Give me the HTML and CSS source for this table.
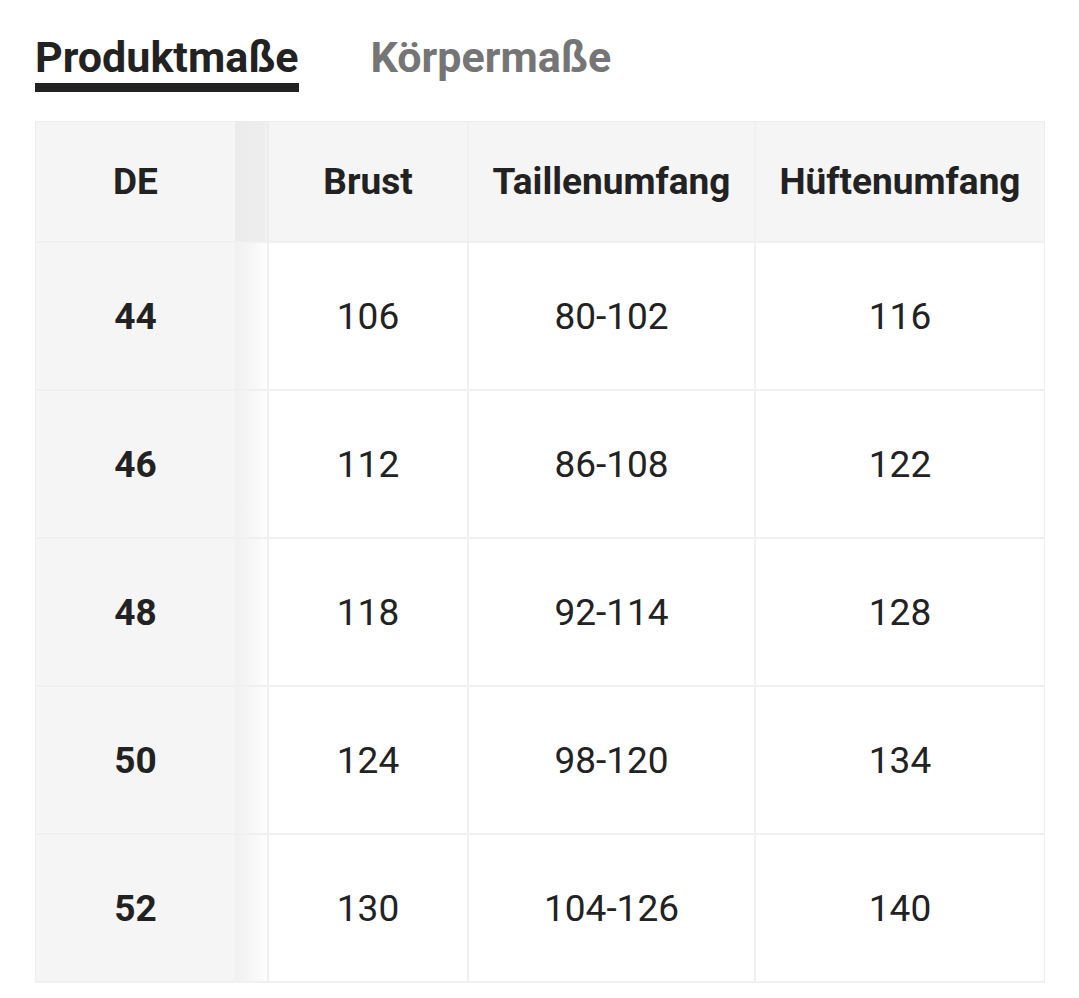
FILE: index.html
```html
<!DOCTYPE html>
<html lang="de">
<head>
<meta charset="utf-8">
<link rel="stylesheet" href="styles.css">
</head>
<body>
<div class="page">
  <div class="tabs">
    <div class="tab active">Produktmaße</div>
    <div class="tab">Körpermaße</div>
  </div>
  <div class="table">
    <div class="row head">
      <div class="cell sticky">DE</div>
      <div class="cell shade"></div>
      <div class="cell c1">Brust</div>
      <div class="cell c2">Taillenumfang</div>
      <div class="cell c3">Hüftenumfang</div>
    </div>
    <div class="row">
      <div class="cell sticky">44</div>
      <div class="cell shade"></div>
      <div class="cell c1">106</div>
      <div class="cell c2">80-102</div>
      <div class="cell c3">116</div>
    </div>
    <div class="row">
      <div class="cell sticky">46</div>
      <div class="cell shade"></div>
      <div class="cell c1">112</div>
      <div class="cell c2">86-108</div>
      <div class="cell c3">122</div>
    </div>
    <div class="row">
      <div class="cell sticky">48</div>
      <div class="cell shade"></div>
      <div class="cell c1">118</div>
      <div class="cell c2">92-114</div>
      <div class="cell c3">128</div>
    </div>
    <div class="row">
      <div class="cell sticky">50</div>
      <div class="cell shade"></div>
      <div class="cell c1">124</div>
      <div class="cell c2">98-120</div>
      <div class="cell c3">134</div>
    </div>
    <div class="row last">
      <div class="cell sticky">52</div>
      <div class="cell shade"></div>
      <div class="cell c1">130</div>
      <div class="cell c2">104-126</div>
      <div class="cell c3">140</div>
    </div>
  </div>
</div>
</body>
</html>
```

FILE: styles.css
```css
html, body {
  margin: 0;
  padding: 0;
  background: #ffffff;
}
body {
  font-family: Roboto, "Liberation Sans", sans-serif;
  color: #222222;
}
.page {
  padding: 28px 35px 0 35px;
}
.tabs {
  display: flex;
  gap: 72px;
  height: 93px;
}
.tab {
  font-size: 43px;
  font-weight: 700;
  color: #757575;
  line-height: 58px;
  height: 64px;
  box-sizing: border-box;
}
.tab.active {
  color: #222222;
  border-bottom: 9px solid #222222;
}
.table {
  width: 1009px;
  border-top: 1px solid #ececec;
  border-right: 1px solid #ececec;
}
.row {
  display: grid;
  grid-template-columns: 200px 32px 200px 287px 1fr;
  height: 148px;
  border-bottom: 2px solid #f0f0f0;
  box-sizing: border-box;
}
.row.head {
  height: 121px;
  background: #f5f5f5;
  font-weight: 700;
}
.cell {
  display: flex;
  align-items: center;
  justify-content: center;
  font-size: 37px;
}
.c1, .c2, .c3 {
  border-left: 2px solid #f0f0f0;
}
.row.head .c1 {
  border-left-color: #ececec;
}
.sticky {
  background: #f5f5f5;
  font-weight: 700;
  border-left: 1px solid #eeeeee;
}
.shade {
  background: linear-gradient(to right, #f0f0f0, #fafafa 80%, #ffffff);
}
.row.head .shade {
  background: linear-gradient(to right, #ebebeb, #ededed 90%, #f3f3f3);
}
```
